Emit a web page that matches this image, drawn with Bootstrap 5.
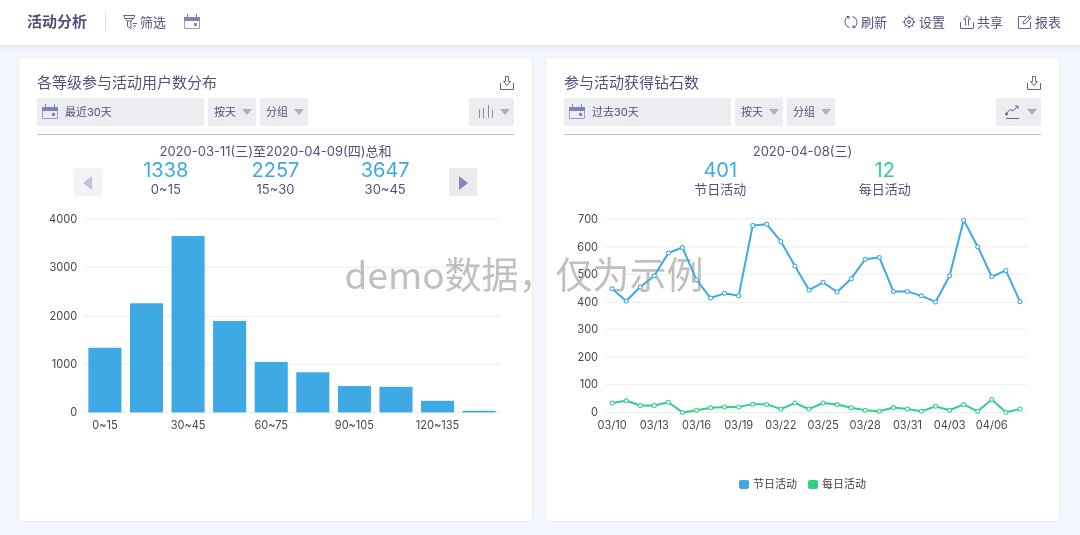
<!DOCTYPE html>
<html lang="zh-CN">
<head>
<meta charset="utf-8">
<meta name="viewport" content="width=device-width, initial-scale=1">
<title>活动分析</title>
<link rel="stylesheet" href="https://cdn.jsdelivr.net/npm/bootstrap@5.3.0/dist/css/bootstrap.min.css">
<style>
  :root { --ink: #51517d; --sky: #3fa9e3; --mint: #2fd283; --chip: #ecedf1; }
  body { background: #f3f6fe; color: var(--ink); font-family: Inter, "Noto Sans CJK SC", sans-serif; font-size: 13px; line-height: 20px; }
  button, select { color: inherit; font: inherit; border: 0; }
  svg { flex: none; }
  .topbar { height: 45px; padding: 0 19px 2px 27px; background: #fff; box-shadow: 0 1px 6px rgba(90, 100, 150, .16); }
  .topbar h1 { font-size: 15px; line-height: 20px; font-weight: 700; }
  .divider { width: 1px; height: 19px; margin: 0 17px 0 18px; background: #dcdce2; }
  .tool { display: inline-flex; align-items: center; gap: 3px; padding: 0; background: none; }
  .actions { gap: 15px; }
  .tools { gap: 18px; }
  .board { padding: 12px 20px 12px 18px; }
  .board > .row { --bs-gutter-x: 12px; --bs-gutter-y: 12px; }
  .panel { --bs-card-border-color: #ebeef6; --bs-card-border-radius: 2px; --bs-card-color: var(--ink); padding: 15px 18px 29px; }
  .panel h2 { font-size: 15px; line-height: 20px; font-weight: 400; }
  .filters { gap: 4px; margin-top: 5px; padding-bottom: 8px; border-bottom: 1px solid #bfbfc3; font-size: 11px; }
  .chip { height: 28px; border-radius: 2px; background-color: var(--chip); }
  .range { flex: 0 1 167px; display: flex; align-items: center; gap: 7px; padding: 0 5px; }
  .pick { width: 48px; padding: 0 0 0 6px; appearance: none; background-repeat: no-repeat; background-position: right 4px center;
    background-image: url("data:image/svg+xml,%3Csvg xmlns='http://www.w3.org/2000/svg' width='10' height='6'%3E%3Cpath d='M0 0h10L5 6z' fill='%23b0b0b5'/%3E%3C/svg%3E"); }
  .kind { width: 45px; display: flex; align-items: center; justify-content: space-between; padding: 0 4px 0 8px; }
  .summary { padding: 6px 37px 0; }
  .figures { padding: 0 9px; }
  .figures.inset { padding: 0 37px; }
  .figure-value { font-size: 20px; line-height: 18px; color: var(--sky); }
  .figure-value.mint { color: var(--mint); }
  .step { width: 28px; height: 28px; padding: 0; margin-top: 7px; border-radius: 2px; background: #ebebee; }
  .step:disabled { opacity: .5; }
  .chart { display: block; width: 100%; margin-top: 6px; font-size: 11px; }
  .chart text { fill: #48484d; }
  .legend-row { margin-top: 41px; gap: 11px; font-size: 11px; line-height: 16px; color: #3f3f44; }
  .swatch { width: 10px; height: 9px; border-radius: 2px; background: var(--sky); }
  .swatch.mint { background: var(--mint); }
  .watermark { position: absolute; left: 0; right: 32px; top: 246px; text-align: center; font: 400 37px/54px "Noto Sans CJK SC", sans-serif; color: #c0c0c0; mix-blend-mode: darken; pointer-events: none; white-space: nowrap; }
</style>
</head>
<body>
<svg width="0" height="0" class="position-absolute" aria-hidden="true">
  <symbol id="calendar" viewBox="0 0 16 16"><path d="M.5 6v8.500h15V6" fill="none" stroke="#9a9dc6"/><path d="M0 3h16v4H0z" fill="#8084b5"/><path d="M3.500 0v4M12.500 0v4" stroke="#8084b5"/><path d="M10 9h3v3h-3z" fill="#8084b5"/></symbol>
  <symbol id="download" viewBox="0 0 14 14"><path d="M.5 7v6.500h13V7M5.500.5h3v5h2L7 9.500 3.500 5.500h2z" fill="none" stroke="#62628c"/></symbol>
</svg>

<header class="topbar d-flex align-items-center justify-content-between position-relative">
  <div class="d-flex align-items-center">
    <h1 class="m-0">活动分析</h1>
    <span class="divider"></span>
    <div class="tools d-flex">
      <button class="tool" type="button">
        <svg width="14" height="14" viewBox="0 0 14 14" fill="none" stroke="#62628c"><path d="M.7.5h11.100L10.500 3.500H2zM2 3.500 4.500 6h3.500l2.500-2.500M4.500 6v5.500L8 13.500V6M10 8.500h4M10 11h3M10 13.500h1"/></svg>筛选
      </button>
      <button class="tool" type="button" aria-label="日期"><svg width="16" height="16"><use href="#calendar"/></svg></button>
    </div>
  </div>
  <nav class="actions d-flex">
    <button class="tool" type="button"><svg width="14" height="14" viewBox="0 0 14 14" fill="none" stroke="#51517d"><path d="M5.500 12.500A5.600 5.600 0 0 1 4.500 1.800M2.500 1.500h2.500v2.500M8.500 1.500A5.600 5.600 0 0 1 9.500 12.200M11.500 12.500H9V10"/></svg>刷新</button>
    <button class="tool" type="button"><svg width="14" height="14" viewBox="0 0 14 14" fill="none" stroke="#51517d"><circle cx="7" cy="7" r="4.500"/><circle cx="7" cy="7" r="1.500"/><path d="M7 .5v2M7 11.500v2M.5 7h2M11.500 7h2M2.400 2.400l1.400 1.400M10.200 10.200l1.400 1.400M2.400 11.600l1.400-1.400M10.200 3.800l1.400-1.400"/></svg>设置</button>
    <button class="tool" type="button"><svg width="14" height="14" viewBox="0 0 14 14" fill="none" stroke="#62628c"><path d="M.5 7v6.500h13V7M5.500 10.500V4h-2L7 .7 10.500 4h-2v6.500"/></svg>共享</button>
    <button class="tool" type="button"><svg width="14" height="14" viewBox="0 0 14 14" fill="none" stroke="#62628c"><path d="M8 1.500H.5v12h12V7M5 9l.7-2.800L11.500.6l2 2-5.700 5.700zM10 2l2 2"/></svg>报表</button>
  </nav>
</header>

<main class="board">
  <div class="row">
    <section class="col-12 col-md-6">
      <div class="panel card h-100">
        <div class="d-flex align-items-center justify-content-between">
          <h2 class="m-0">各等级参与活动用户数分布</h2>
          <button class="tool" type="button" aria-label="下载"><svg width="14" height="14"><use href="#download"/></svg></button>
        </div>
        <div class="filters d-flex">
          <button class="chip range" type="button"><svg width="16" height="16"><use href="#calendar"/></svg>最近30天</button>
          <select class="chip pick" aria-label="时间粒度"><option>按天</option></select>
          <select class="chip pick" aria-label="分组"><option>分组</option></select>
          <button class="chip kind ms-auto" type="button" aria-label="柱状图">
            <svg width="16" height="14" viewBox="0 0 16 14" stroke="#8c8ea8"><path d="M2.500 4v9M6.500 3v10M11.500 0v13M15.500 5v8"/></svg>
            <svg width="10" height="6"><path d="M0 0h10L5 6z" fill="#b0b0b5"/></svg>
          </button>
        </div>
        <div class="summary text-center">
          <div>2020-03-11(三)至2020-04-09(四)总和</div>
          <div class="d-flex">
            <button class="step" type="button" aria-label="上一页" disabled><svg width="10" height="14"><path d="M9 0v14L0 7z" fill="#8488b8"/></svg></button>
            <div class="figures row g-0 flex-grow-1">
              <div class="col"><div class="figure-value">1338</div>0~15</div>
              <div class="col"><div class="figure-value">2257</div>15~30</div>
              <div class="col"><div class="figure-value">3647</div>30~45</div>
            </div>
            <button class="step" type="button" aria-label="下一页"><svg width="10" height="14"><path d="M1 0v14l9-7z" fill="#8488b8"/></svg></button>
          </div>
        </div>
        <svg class="chart" id="levels" viewBox="0 0 476 230" role="img" aria-label="各等级参与活动用户数分布"></svg>
      </div>
    </section>

    <section class="col-12 col-md-6">
      <div class="panel card h-100">
        <div class="d-flex align-items-center justify-content-between">
          <h2 class="m-0">参与活动获得钻石数</h2>
          <button class="tool" type="button" aria-label="下载"><svg width="14" height="14"><use href="#download"/></svg></button>
        </div>
        <div class="filters d-flex">
          <button class="chip range" type="button"><svg width="16" height="16"><use href="#calendar"/></svg>过去30天</button>
          <select class="chip pick" aria-label="时间粒度"><option>按天</option></select>
          <select class="chip pick" aria-label="分组"><option>分组</option></select>
          <button class="chip kind ms-auto" type="button" aria-label="折线图">
            <svg width="16" height="14" viewBox="0 0 16 14" fill="none" stroke="#62628c"><path d="M2 13.500h13M2 9l4-4.500 3 1.500 5-5M11 1h3v3"/><circle cx="2.500" cy="9" r="1" fill="#62628c"/></svg>
            <svg width="10" height="6"><path d="M0 0h10L5 6z" fill="#b0b0b5"/></svg>
          </button>
        </div>
        <div class="summary text-center">
          <div>2020-04-08(三)</div>
          <div class="figures inset row g-0">
            <div class="col"><div class="figure-value">401</div>节日活动</div>
            <div class="col"><div class="figure-value mint">12</div>每日活动</div>
          </div>
        </div>
        <svg class="chart" id="diamonds" viewBox="0 0 476 230" role="img" aria-label="参与活动获得钻石数"></svg>
        <div class="legend-row d-flex justify-content-center">
          <span class="d-flex align-items-center gap-1"><i class="swatch"></i>节日活动</span>
          <span class="d-flex align-items-center gap-1"><i class="swatch mint"></i>每日活动</span>
        </div>
      </div>
    </section>
  </div>
</main>
<div class="watermark">demo数据，仅为示例</div>

<script src="https://cdn.jsdelivr.net/npm/bootstrap@5.3.0/dist/js/bootstrap.bundle.min.js"></script>
<script>
  const TOP = 14, BASE = 207;

  function axes(left, right, max, step) {
    let out = '';
    for (let v = 0; v <= max; v += step) {
      const y = Math.round(BASE - v / max * (BASE - TOP));
      out += `<path d="M${left} ${y}H${right}" stroke="#ededf0"/><text x="${left - 7}" y="${y + 4}" text-anchor="end">${v}</text>`;
    }
    return out;
  }

  // Bars: number of users in each level range
  const users = [1338, 2257, 3647, 1890, 1045, 830, 545, 530, 240, 35];
  const ranges = ['0~15', '15~30', '30~45', '45~60', '60~75', '75~90', '90~105', '105~120', '120~135', '135~150'];
  let bars = axes(47, 462, 4000, 1000);
  users.forEach((n, i) => {
    const mid = 47 + 41.5 * (i + 0.5), h = n / 4000 * (BASE - TOP);
    bars += `<rect x="${mid - 16.5}" y="${BASE - h}" width="33" height="${h}" fill="#3fa9e3"/>`;
    if (i % 2 === 0) bars += `<text x="${mid}" y="224" text-anchor="middle">${ranges[i]}</text>`;
  });
  document.getElementById('levels').innerHTML = bars;

  // Lines: diamonds gained per day, from 10 March
  const festival = [448, 403, 454, 495, 577, 597, 480, 414, 431, 422, 677, 681, 619, 530, 443, 471, 436, 484, 554, 561, 438, 438, 422, 400, 495, 696, 600, 491, 514, 401];
  const daily = [34, 42, 25, 25, 37, 0, 8, 17, 20, 20, 30, 29, 12, 34, 12, 34, 29, 17, 8, 4, 18, 12, 4, 22, 8, 29, 4, 47, 1, 12];
  const band = 421 / 30;
  const midX = i => 41 + band * (i + 0.5);
  const series = (data, color) => {
    const pts = data.map((v, i) => [midX(i), BASE - v / 700 * (BASE - TOP)]);
    return `<polyline points="${pts.join(' ')}" fill="none" stroke="${color}" stroke-width="2" stroke-linejoin="round"/>` +
      pts.map(([x, y]) => `<circle cx="${x}" cy="${y}" r="2" fill="#fff" stroke="${color}"/>`).join('');
  };
  let lines = axes(41, 462, 700, 100);
  for (let i = 0; i < 30; i += 3) {
    const d = new Date(2020, 2, 10 + i);
    const label = [d.getMonth() + 1, d.getDate()].map(n => String(n).padStart(2, '0')).join('/');
    lines += `<text x="${midX(i)}" y="224" text-anchor="middle">${label}</text>`;
  }
  document.getElementById('diamonds').innerHTML = lines + series(festival, '#3fa9e3') + series(daily, '#2fd283');
</script>
</body>
</html>
